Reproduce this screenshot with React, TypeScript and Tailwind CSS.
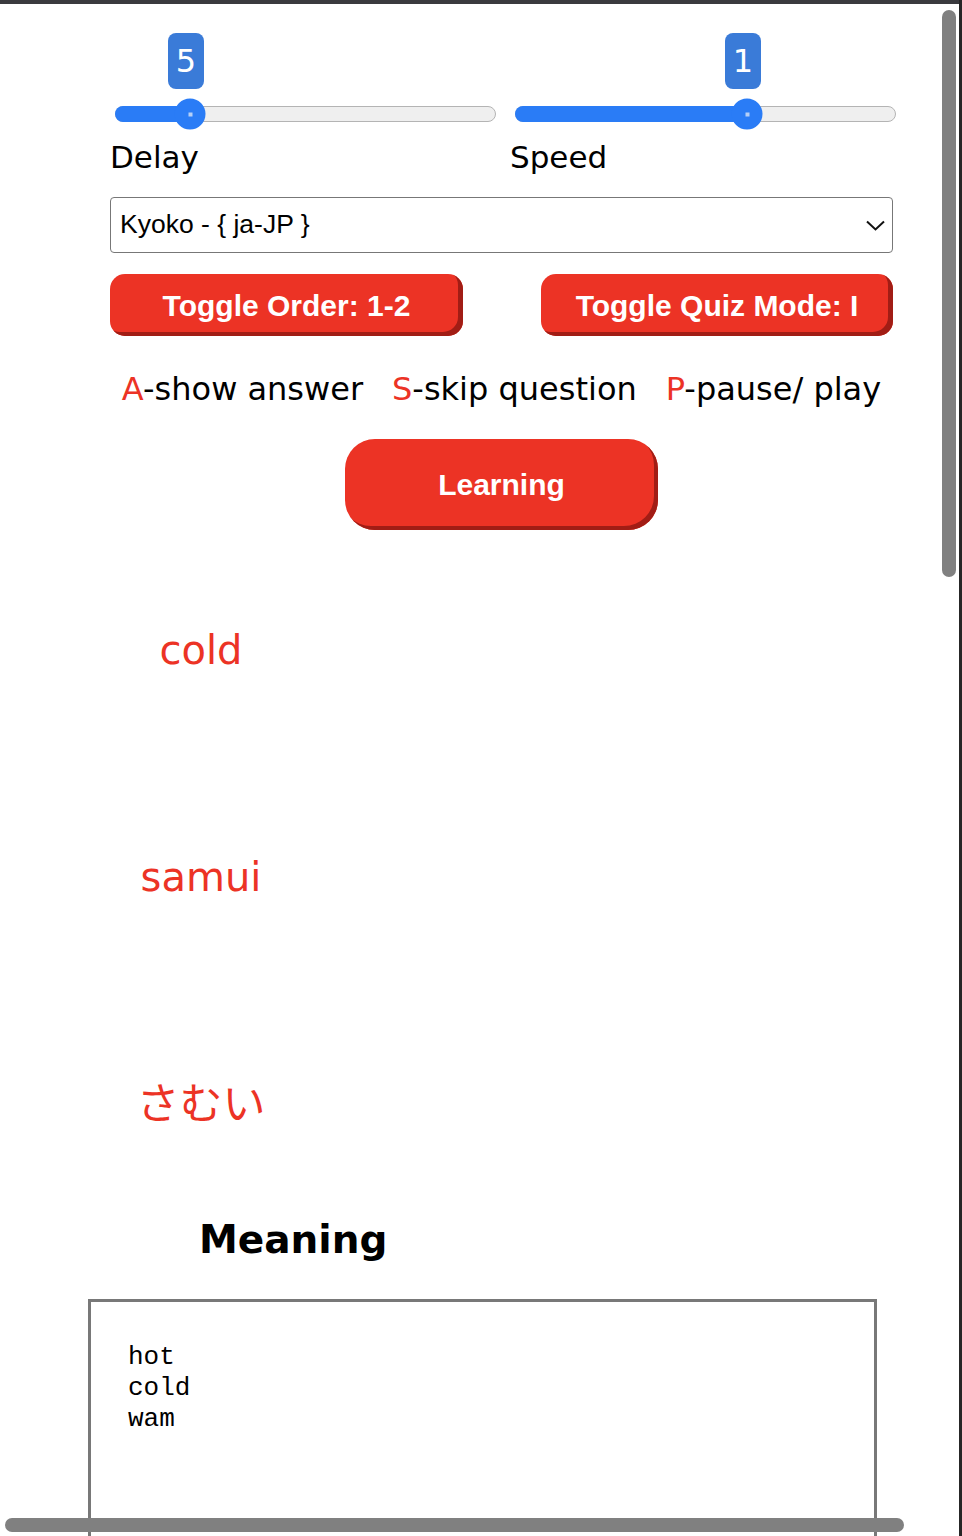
import React from 'react';

const sliders = [
  { label: 'Delay', value: 5, pos: 74 },
  { label: 'Speed', value: 1, pos: 231 },
];

const hints = [
  { key: 'A', text: '-show answer' },
  { key: 'S', text: '-skip question' },
  { key: 'P', text: '-pause/ play' },
];

const words = [
  { text: 'cold', size: 'text-[40px]' },
  { text: 'samui', size: 'text-[40px]' },
  { text: 'さむい', size: 'text-[43px]' },
];

const meanings = ['hot', 'cold', 'wam'];

function Slider({ label, value, pos, first }: { label: string; value: number; pos: number; first: boolean }) {
  return (
    <div className={first ? 'w-[400px] shrink-0' : 'w-[384px] shrink-0'}>
      <div className="relative ml-[5px] h-[56px] w-[381px]">
        <div
          className="absolute top-0 flex h-[56px] w-[36px] -translate-x-1/2 items-center justify-center rounded-[8px] bg-[#3a7bd8] text-[32px] text-white"
          style={{ left: pos - 3 }}
        >
          {value}
        </div>
      </div>
      <div className="relative ml-[5px] mt-[17px] h-[16px] w-[381px] rounded-full border-[1.5px] border-[#b4b4b4] bg-[#efefef]">
        <div
          className="absolute -left-[1.5px] -top-[1.5px] h-[16px] rounded-full bg-[#2a7cf6]"
          style={{ width: pos + 2 }}
        />
        <div
          className="absolute top-1/2 flex h-[31px] w-[31px] -translate-x-1/2 -translate-y-1/2 items-center justify-center rounded-full bg-[#2a7cf6]"
          style={{ left: pos }}
        >
          <span className="h-[4px] w-[4px] bg-[#b5cff6]" />
        </div>
      </div>
      <div className="mt-[18px] text-[31px] leading-[35px] text-black">{label}</div>
    </div>
  );
}

export default function App() {
  return (
    <div className="relative h-[1536px] overflow-hidden bg-white font-['DejaVu_Sans','Noto_Sans_CJK_JP',sans-serif]">
      <div className="h-[4px] bg-[#3a3a3e]" />

      <div className="w-[894px] pl-[110px]">
        <div className="flex pt-[29px]">
          {sliders.map((s, i) => (
            <Slider key={s.label} {...s} first={i === 0} />
          ))}
        </div>

        <div className="mt-[22px] flex h-[56px] w-[783px] items-center justify-between rounded-[4px] border-[1.5px] border-[#777777] pl-[9px] pr-[7px] font-['Liberation_Sans',Arial,sans-serif] text-[26.5px] text-black">
          <span>Kyoko - {'{'} ja-JP {'}'}</span>
          <svg width="19" height="11" viewBox="0 0 19 11" fill="none">
            <polyline points="1,1.5 9.5,9.5 18,1.5" stroke="#111" strokeWidth="2" />
          </svg>
        </div>

        <div className="mt-[21px] flex w-[783px] justify-between font-['Liberation_Sans',Arial,sans-serif]">
          <button className="h-[62px] w-[353px] rounded-[15px] bg-[#ec3325] text-[30px] font-bold text-white shadow-[inset_-5px_-4px_0_#a11d15]">
            Toggle Order: 1-2
          </button>
          <button className="h-[62px] w-[352px] rounded-[15px] bg-[#ec3325] text-[30px] font-bold text-white shadow-[inset_-5px_-4px_0_#a11d15]">
            Toggle Quiz Mode: I
          </button>
        </div>

        <div className="mt-[35px] flex w-[783px] justify-center gap-[29px] text-[32px] leading-[37px] text-black">
          {hints.map((h) => (
            <span key={h.key}>
              <span className="text-[#ec3325]">{h.key}</span>
              {h.text}
            </span>
          ))}
        </div>

        <div className="mt-[31px] flex w-[783px] justify-center">
          <button className="h-[91px] w-[313px] rounded-[30px] bg-[#ec3325] font-['Liberation_Sans',Arial,sans-serif] text-[30px] font-bold text-white shadow-[inset_-4px_-4px_0_#a11d15]">
            Learning
          </button>
        </div>

        <div className="mt-[96px] flex w-[182px] flex-col gap-[179px] text-center leading-[48px] text-[#ec3325]">
          {words.map((w) => (
            <div key={w.text} className={w.size}>
              {w.text}
            </div>
          ))}
        </div>

        <div className="ml-[89px] mt-[89px] text-[39px] font-bold leading-[46px] text-black">Meaning</div>

        <div className="-ml-[22px] mt-[36px] h-[300px] w-[789px] border-[3px] border-[#787878] pl-[37px] pt-[40px] font-['Liberation_Mono','Courier_New',monospace] text-[26px] leading-[31px] text-black">
          {meanings.map((m) => (
            <div key={m}>{m}</div>
          ))}
        </div>
      </div>

      <div className="absolute right-0 top-0 h-full w-[3px] bg-[#262626]" />
      <div className="absolute left-[942px] top-[10px] h-[567px] w-[14px] rounded-full bg-[#808080]" />
      <div className="absolute left-[5px] top-[1518px] h-[14px] w-[899px] rounded-full bg-[#808080]" />
    </div>
  );
}
